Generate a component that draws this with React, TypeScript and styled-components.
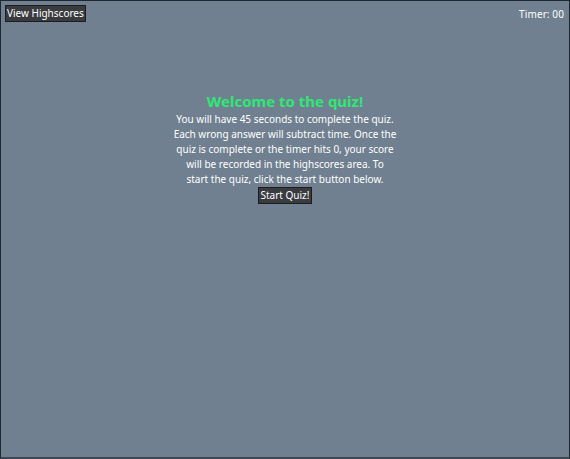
import React from "react";
import styled, { createGlobalStyle } from "styled-components";

const Global = createGlobalStyle`
  html, body { margin: 0; padding: 0; height: 100%; }
  body {
    background: #708090;
    font-family: "Noto Sans", "Open Sans", sans-serif;
    color: #ffffff;
  }
  #root { height: 100%; }
`;

const Page = styled.div`
  box-sizing: border-box;
  height: 459px;
  border: 1px solid #1e2630;
  border-bottom: 2px solid #3c4550;
  background: #708090;
  display: flex;
  flex-direction: column;
`;

const TopBar = styled.header`
  display: flex;
  justify-content: space-between;
  align-items: flex-start;
  padding: 4px 5px 0 4px;
`;

const Button = styled.button`
  font-family: "Noto Sans", "Open Sans", sans-serif;
  font-size: 10px;
  line-height: 15px;
  color: #ffffff;
  background: #393b3f;
  border: 1px solid #1c1d20;
  padding: 0 1px;
  margin: 0;
  cursor: pointer;
`;

const Timer = styled.div`
  font-size: 10px;
  line-height: 14px;
  padding-top: 2px;
  letter-spacing: 0.1px;
`;

const Main = styled.main`
  display: flex;
  flex-direction: column;
  align-items: center;
  margin-top: 69px;
`;

const Title = styled.h1`
  margin: 0;
  font-size: 15px;
  line-height: 20px;
  font-weight: bold;
  color: #2ee874;
`;

const Intro = styled.p`
  margin: 1px 0 0;
  width: 224px;
  text-align: center;
  font-size: 10px;
  line-height: 15px;
`;

export default function App() {
  return (
    <>
      <Global />
      <Page>
        <TopBar>
          <Button>View Highscores</Button>
          <Timer>Timer: 00</Timer>
        </TopBar>
        <Main>
          <Title>Welcome to the quiz!</Title>
          <Intro>
            You will have 45 seconds to complete the quiz. Each wrong answer will subtract time. Once the quiz is complete or the timer hits 0, your score will be recorded in the highscores area. To
            <br />
            start the quiz, click the start button below.
          </Intro>
          <Button>Start Quiz!</Button>
        </Main>
      </Page>
    </>
  );
}
